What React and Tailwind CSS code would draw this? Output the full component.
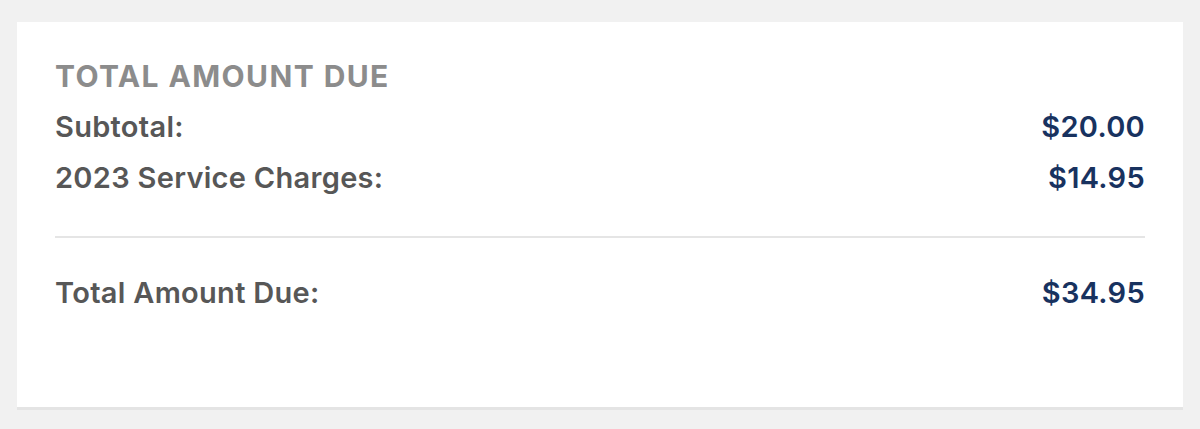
export default function App() {
  const rows = [
    { label: "Subtotal:", value: "$20.00" },
    { label: "2023 Service Charges:", value: "$14.95" },
  ];

  return (
    <div className="min-h-[429px] bg-[#f1f1f1] px-[17px] pt-[22px] font-['Inter','Liberation_Sans',sans-serif]">
      <div className="bg-white px-[38px] pt-[34px] pb-[89px] shadow-[0_3px_0_#e4e4e4]">
        <h2 className="text-[30px] font-bold uppercase leading-[40px] tracking-[1.4px] text-[#8c8c8c]">
          Total Amount Due
        </h2>
        <div className="mt-[5px] flex flex-col">
          {rows.map((r) => (
            <div
              key={r.label}
              className="flex h-[51px] items-center justify-between text-[29px] font-semibold tracking-[0.3px]"
            >
              <span className="text-[#575757]">{r.label}</span>
              <span className="text-[#18325f]">{r.value}</span>
            </div>
          ))}
        </div>
        <div className="mt-[33px] h-[2px] bg-[#e5e5e5]" />
        <div className="mt-[29px] flex h-[51px] items-center justify-between text-[29px] font-semibold tracking-[0.3px]">
          <span className="text-[#575757]">Total Amount Due:</span>
          <span className="text-[#18325f]">$34.95</span>
        </div>
      </div>
    </div>
  );
}
